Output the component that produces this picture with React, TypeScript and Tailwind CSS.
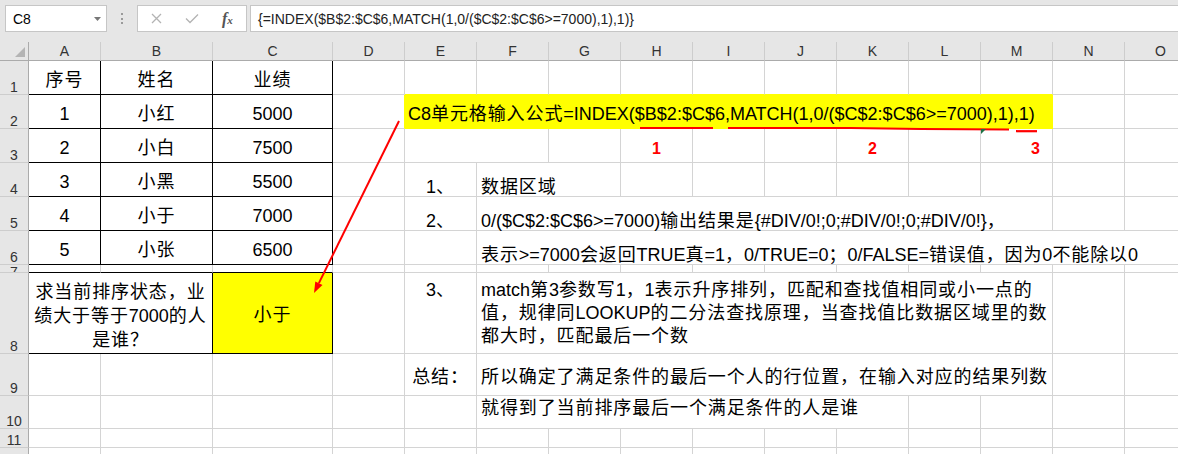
import React from 'react';

const CJK = /([\u3000-\u303f\u3400-\u9fff\uff00-\uffef]+)/;

// CJK runs get a touch of tracking so they match Excel's wider glyph advance
function Txt({ s }: { s: string }) {
  return (
    <>
      {s.split(CJK).map((part, i) =>
        i % 2 === 1 ? (
          <span key={i} className="tracking-[0.9px]">
            {part}
          </span>
        ) : (
          part
        )
      )}
    </>
  );
}

const COLS = ['A', 'B', 'C', 'D', 'E', 'F', 'G', 'H', 'I', 'J', 'K', 'L', 'M', 'N', 'O'];

const grid = 'border-r border-b border-[#d4d4d4]';
const box = 'border-r border-b border-black';
const tbl = `${box} flex items-center justify-center pt-[4px] text-[18px] leading-[22px]`;
const rhBase =
  'bg-[#e6e6e6] border-r border-b border-r-[#ababab] border-b-[#cdcdcd] flex justify-center text-[14px] leading-none text-[#333] overflow-hidden';
const rh = `${rhBase} items-end`;
const ch =
  'bg-[#e6e6e6] border-r border-b border-r-[#cdcdcd] border-b-[#ababab] flex items-center justify-center text-[14px] leading-none text-[#333]';
const eCell = `${grid} flex items-end justify-center text-[18px] leading-[18px] whitespace-nowrap`;
const fCell = `${grid} flex items-end pl-[4px] text-[18px] leading-[18px] whitespace-nowrap`;
const red = `${grid} flex items-center pt-[6px] text-[16px] leading-[16px] font-bold text-[#ff0000]`;

const people = [
  ['1', '小红', '5000'],
  ['2', '小白', '7500'],
  ['3', '小黑', '5500'],
  ['4', '小于', '7000'],
  ['5', '小张', '6500'],
];

function Blank({ n, extra = '' }: { n: number; extra?: string }) {
  return (
    <>
      {Array.from({ length: n }, (_, i) => (
        <div key={i} className={`${grid} ${extra}`} />
      ))}
    </>
  );
}

function FormulaBar() {
  return (
    <div className="h-[42px] bg-[#e6e6e6] flex items-start pt-[5px] text-[14px] leading-none">
      <div className="ml-[5px] w-[102px] h-[27px] shrink-0 bg-white border border-[#c6c6c6] flex items-center justify-between pl-[7px] pr-[5px]">
        <span>C8</span>
        <svg width="7" height="4" viewBox="0 0 7 4">
          <polygon points="0,0 7,0 3.5,4" fill="#777" />
        </svg>
      </div>
      <div className="w-[30px] h-[27px] shrink-0 flex flex-col items-center justify-center gap-[2.5px]">
        <span className="w-[2px] h-[2px] bg-[#9a9a9a]" />
        <span className="w-[2px] h-[2px] bg-[#9a9a9a]" />
        <span className="w-[2px] h-[2px] bg-[#9a9a9a]" />
      </div>
      <div className="w-[110px] h-[27px] shrink-0 bg-white border border-[#c6c6c6] flex items-center pl-[13px] gap-[23px]">
        <svg width="11" height="11" viewBox="0 0 11 11">
          <path d="M1 1 L10 10 M10 1 L1 10" stroke="#b3b3b3" strokeWidth="1.3" fill="none" />
        </svg>
        <svg width="14" height="11" viewBox="0 0 14 11">
          <polyline points="1,5.5 5,9.5 13,1.5" stroke="#b3b3b3" strokeWidth="1.3" fill="none" />
        </svg>
        <span className="font-['Liberation_Serif',serif] italic font-bold text-[16px] text-[#555]">
          f<span className="text-[11px]">x</span>
        </span>
      </div>
      <div className="ml-[3px] flex-1 -mr-[4px] h-[27px] bg-white border border-[#c6c6c6] flex items-center pl-[7px] text-[#222] whitespace-nowrap">
        {'{=INDEX($B$2:$C$6,MATCH(1,0/($C$2:$C$6>=7000),1),1)}'}
      </div>
    </div>
  );
}

export default function App() {
  return (
    <div className="relative w-[1178px] h-[454px] overflow-hidden bg-white text-black font-['Liberation_Sans','Noto_Sans_CJK_SC',sans-serif]">
      <FormulaBar />

      <div className="grid w-max grid-cols-[29px_72px_112px_120px_repeat(12,72px)] grid-rows-[19px_34px_34px_34px_34px_34px_34px_8px_81px_42px_33px_19px_19px]">
        {/* Column headers */}
        <div className="bg-[#e6e6e6] border-r border-b border-[#ababab] flex items-end justify-end pr-[3px] pb-[3px]">
          <svg width="10" height="10" viewBox="0 0 10 10">
            <polygon points="10,0 10,10 0,10" fill="#b4b4b4" />
          </svg>
        </div>
        {COLS.map((c) => (
          <div key={c} className={ch}>
            {c}
          </div>
        ))}

        {/* Row 1 */}
        <div className={rh}>1</div>
        <div className={tbl}><Txt s="序号" /></div>
        <div className={tbl}><Txt s="姓名" /></div>
        <div className={tbl}><Txt s="业绩" /></div>
        <Blank n={1} />
        <Blank n={9} extra="border-b-[#ffff00]" />
        <Blank n={2} />

        {/* Row 2 */}
        <div className={rh}>2</div>
        <div className={tbl}>{people[0][0]}</div>
        <div className={tbl}><Txt s={people[0][1]} /></div>
        <div className={tbl}>{people[0][2]}</div>
        <div className={`${grid} border-r-[#ffff00]`} />
        <div className="col-span-9 bg-[#ffff00] border-r border-b border-[#ffff00] flex items-center pl-[3px] pt-[4px] text-[18px] leading-[22px] whitespace-nowrap">
          <Txt s="C8单元格输入公式=INDEX($B$2:$C$6,MATCH(1,0/($C$2:$C$6>=7000),1),1)" />
        </div>
        <Blank n={2} />

        {/* Row 3 */}
        <div className={rh}>3</div>
        <div className={tbl}>{people[1][0]}</div>
        <div className={tbl}><Txt s={people[1][1]} /></div>
        <div className={tbl}>{people[1][2]}</div>
        <Blank n={1} />
        <div className={`${grid} col-span-2`} />
        <Blank n={1} />
        <div className={`${red} justify-center`}>1</div>
        <Blank n={2} />
        <div className={`${red} justify-center`}>2</div>
        <Blank n={1} />
        <div className={`${red} justify-end pr-[12px]`}>3</div>
        <Blank n={2} />

        {/* Row 4 */}
        <div className={rh}>4</div>
        <div className={tbl}>{people[2][0]}</div>
        <div className={tbl}><Txt s={people[2][1]} /></div>
        <div className={tbl}>{people[2][2]}</div>
        <Blank n={1} />
        <div className={eCell}><Txt s="1、" /></div>
        <div className={`${fCell} col-span-2`}><Txt s="数据区域" /></div>
        <Blank n={8} />

        {/* Row 5 */}
        <div className={rh}>5</div>
        <div className={tbl}>{people[3][0]}</div>
        <div className={tbl}><Txt s={people[3][1]} /></div>
        <div className={tbl}>{people[3][2]}</div>
        <Blank n={1} />
        <div className={eCell}><Txt s="2、" /></div>
        <div className={`${fCell} col-span-8`}>
          <Txt s="0/($C$2:$C$6>=7000)输出结果是{#DIV/0!;0;#DIV/0!;0;#DIV/0!}，" />
        </div>
        <Blank n={2} />

        {/* Row 6 */}
        <div className={rh}>6</div>
        <div className={tbl}>{people[4][0]}</div>
        <div className={tbl}><Txt s={people[4][1]} /></div>
        <div className={tbl}>{people[4][2]}</div>
        <Blank n={2} />
        <div className={`${fCell} col-span-10`}>
          <Txt s="表示>=7000会返回TRUE真=1，0/TRUE=0；0/FALSE=错误值，因为0不能除以0" />
        </div>

        {/* Row 7 */}
        <div className={`${rhBase} items-start`}>7</div>
        <div className="border-r border-b border-r-[#d4d4d4] border-b-black" />
        <div className="border-r border-b border-r-[#d4d4d4] border-b-black" />
        <div className="border-r border-b border-r-[#d4d4d4] border-b-black" />
        <Blank n={12} />

        {/* Row 8 */}
        <div className={rh}>8</div>
        <div className={`${box} col-span-2 flex items-center justify-center pt-[6px] text-[18px] leading-[24px] text-center`}>
          <div>
            <Txt s="求当前排序状态，业" />
            <br />
            <Txt s="绩大于等于7000的人" />
            <br />
            <Txt s="是谁？" />
          </div>
        </div>
        <div className={`${box} bg-[#ffff00] flex items-center justify-center pt-[4px] text-[18px] leading-[22px]`}>
          <Txt s="小于" />
        </div>
        <Blank n={1} />
        <div className={`${grid} flex items-start justify-center pt-[6px] text-[18px] leading-[23px]`}>
          <Txt s="3、" />
        </div>
        <div className={`${grid} col-span-8 flex items-center pl-[4px] text-[18px] leading-[23px] whitespace-nowrap`}>
          <div>
            <Txt s="match第3参数写1，1表示升序排列，匹配和查找值相同或小一点的" />
            <br />
            <Txt s="值，规律同LOOKUP的二分法查找原理，当查找值比数据区域里的数" />
            <br />
            <Txt s="都大时，匹配最后一个数" />
          </div>
        </div>
        <Blank n={2} />

        {/* Row 9 */}
        <div className={rh}>9</div>
        <Blank n={4} />
        <div className={`${grid} flex items-center justify-center pt-[5px] text-[18px] leading-[22px]`}>
          <Txt s="总结：" />
        </div>
        <div className={`${grid} col-span-8 flex items-center pl-[4px] pt-[5px] text-[18px] leading-[22px] whitespace-nowrap`}>
          <Txt s="所以确定了满足条件的最后一个人的行位置，在输入对应的结果列数" />
        </div>
        <Blank n={2} />

        {/* Row 10 */}
        <div className={rh}>10</div>
        <Blank n={5} />
        <div className={`${grid} col-span-6 flex items-start pl-[4px] pt-[1px] text-[18px] leading-[22px] whitespace-nowrap`}>
          <Txt s="就得到了当前排序最后一个满足条件的人是谁" />
        </div>
        <Blank n={4} />

        {/* Rows 11-12 */}
        <div className={rh}>11</div>
        <Blank n={15} />
        <div className={rh}>12</div>
        <Blank n={15} />
      </div>

      {/* Annotations drawn over the sheet */}
      <svg className="absolute left-0 top-0 pointer-events-none" width="1178" height="454">
        <line x1="399" y1="121" x2="318.9" y2="283.1" stroke="#ff0000" strokeWidth="2" />
        <polygon points="314,293 322.5,284.9 315.3,281.4" fill="#ff0000" />
        <line x1="640" y1="128" x2="713" y2="128" stroke="#ff0000" strokeWidth="2.2" />
        <polyline
          points="728,128 851,128 921,129 1009,129.5"
          fill="none"
          stroke="#ff0000"
          strokeWidth="2.2"
        />
        <line x1="1016" y1="131.2" x2="1037" y2="131.2" stroke="#ff0000" strokeWidth="2.2" />
        <polygon points="981,129 986,129 981,134" fill="#1e7145" />
      </svg>
    </div>
  );
}
